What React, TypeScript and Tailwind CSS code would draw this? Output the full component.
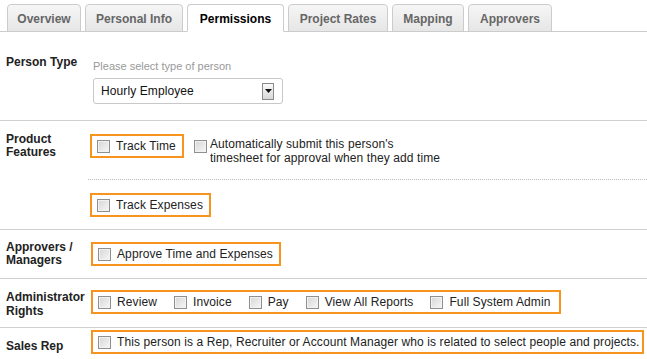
import type { ReactNode } from 'react';

const tabs = [
  { label: 'Overview', w: 'w-[74px]' },
  { label: 'Personal Info', w: 'w-[98px]' },
  { label: 'Permissions', w: 'w-[97px]', active: true },
  { label: 'Project Rates', w: 'w-[100px]' },
  { label: 'Mapping', w: 'w-[72px]' },
  { label: 'Approvers', w: 'w-[84px]' },
];

function Check() {
  return (
    <span className="inline-block h-[13px] w-[13px] shrink-0 border border-[#8e8f8f] bg-linear-to-br from-[#d6d6d6] to-[#f7f7f7] shadow-[inset_0_0_0_1px_#f2f2f2]" />
  );
}

function Box({ children, pr = 'pr-[6px]' }: { children: ReactNode; pr?: string }) {
  return (
    <div className={`inline-flex h-[24px] items-center border-2 border-[#f7941d] bg-white pl-[5px] ${pr}`}>
      {children}
    </div>
  );
}

function Item({ label, last }: { label: string; last?: boolean }) {
  return (
    <span className={`flex items-center gap-[6px] whitespace-nowrap ${last ? '' : 'mr-[17px]'}`}>
      <Check />
      <span className="tracking-[0.1px]">{label}</span>
    </span>
  );
}

function Label({ children, pt, lh = 'leading-[13px]' }: { children: ReactNode; pt: string; lh?: string }) {
  return (
    <div className={`w-[90px] shrink-0 pl-[6px] font-bold text-[#222] ${pt} ${lh}`}>{children}</div>
  );
}

export default function App() {
  return (
    <div className="h-[359px] w-[647px] overflow-hidden bg-white font-['Liberation_Sans',Arial,sans-serif] text-[12px] text-[#222]">
      {/* tabs */}
      <div className="flex gap-[4px] border-b border-[#cccccc] pl-[7px] pt-[4px]">
        {tabs.map((t) => (
          <div
            key={t.label}
            className={`-mb-px flex h-[28px] items-center justify-center rounded-t-[4px] border pt-px text-[12px] font-bold ${t.w} ${
              t.active
                ? 'border-[#cccccc] border-b-white bg-white text-black'
                : 'border-[#cccccc] bg-linear-to-b from-[#f6f6f6] to-[#e6e6e6] text-[#666]'
            }`}
          >
            {t.label}
          </div>
        ))}
      </div>

      {/* person type */}
      <div className="flex border-b border-[#d0d0d0] pb-[16px]">
        <Label pt="pt-[23px]" lh="leading-[14px]">Person Type</Label>
        <div className="ml-[3px] pt-[27px]">
          <div className="text-[11px] leading-[14px] text-[#999]">Please select type of person</div>
          <div className="mt-[5px] flex h-[26px] w-[190px] items-center rounded-[3px] border border-[#c8c8c8] pl-[7px] text-[#111]">
            <span className="tracking-[0.1px]">Hourly Employee</span>
            <span className="ml-auto mr-[8px] flex h-[17px] w-[12px] items-center justify-center border border-[#8a8a8a] bg-linear-to-b from-[#fafafa] to-[#d8d8d8]">
              <svg width="7" height="4" viewBox="0 0 7 4">
                <path d="M0 0h7L3.5 4z" fill="#111" />
              </svg>
            </span>
          </div>
        </div>
      </div>

      {/* product features */}
      <div className="flex border-b border-[#d0d0d0]">
        <Label pt="pt-[12px]">
          Product
          <br />
          Features
        </Label>
        <div className="flex-1 pb-[12px] pt-[13px]">
          <div className="flex items-start">
            <Box pr="pr-[6px]">
              <Item label="Track Time" last />
            </Box>
            <div className="ml-[10px] mt-[6px] flex">
              <Check />
            </div>
            <p className="ml-[3px] mt-[3px] w-[232px] leading-[14px] tracking-[0.1px]">
              Automatically submit this person's timesheet for approval when they add time
            </p>
          </div>
          <div className="-ml-[2px] mt-[14px] border-t border-dotted border-[#bbbbbb]" />
          <div className="mt-[13px]">
            <Box>
              <Item label="Track Expenses" last />
            </Box>
          </div>
        </div>
      </div>

      {/* approvers */}
      <div className="flex border-b border-[#d0d0d0]">
        <Label pt="pt-[11px]">
          Approvers /
          <br />
          Managers
        </Label>
        <div className="pb-[12px] pl-px pt-[12px]">
          <Box>
            <Item label="Approve Time and Expenses" last />
          </Box>
        </div>
      </div>

      {/* admin rights */}
      <div className="flex border-b border-[#d0d0d0]">
        <Label pt="pt-[11px]" lh="leading-[14px]">
          Administrator
          <br />
          Rights
        </Label>
        <div className="pb-[13px] pl-px pt-[11px]">
          <Box pr="pr-[8px]">
            <Item label="Review" />
            <Item label="Invoice" />
            <Item label="Pay" />
            <Item label="View All Reports" />
            <Item label="Full System Admin" last />
          </Box>
        </div>
      </div>

      {/* sales rep */}
      <div className="flex">
        <Label pt="pt-[11px]" lh="leading-[14px]">Sales Rep</Label>
        <div className="pl-px pt-[2px]">
          <Box pr="pr-[2px]">
            <Item label="This person is a Rep, Recruiter or Account Manager who is related to select people and projects." last />
          </Box>
        </div>
      </div>
    </div>
  );
}
